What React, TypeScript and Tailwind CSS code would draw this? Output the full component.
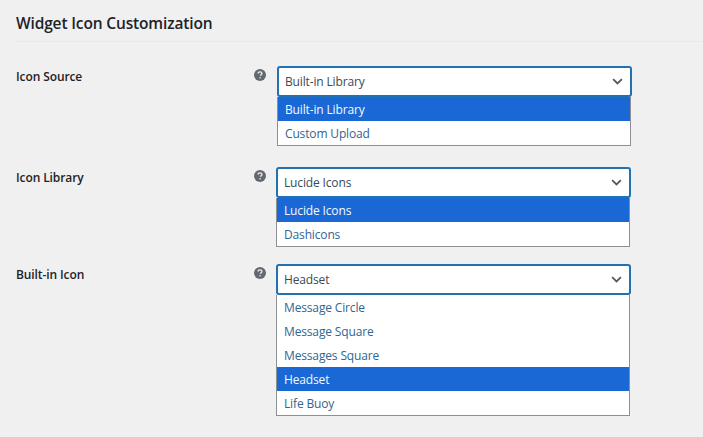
const FONT = "font-['Open_Sans','Noto_Sans',sans-serif]";

function Help() {
  return (
    <svg viewBox="0 0 12 12" className="w-[12px] h-[12px] shrink-0" aria-hidden="true">
      <circle cx="6" cy="6" r="6" fill="#646970" />
      <path d="M4.1 4.6c0-1.1.9-1.7 1.95-1.7 1.1 0 1.9.6 1.9 1.55 0 .75-.45 1.1-.95 1.4-.4.25-.6.45-.6.95" fill="none" stroke="#f0f0f1" strokeWidth="1.3" />
      <rect x="5.45" y="8.1" width="1.3" height="1.3" fill="#f0f0f1" />
    </svg>
  );
}

function Chevron() {
  return (
    <svg viewBox="0 0 12 8" className="w-[11px] h-[7px]" aria-hidden="true">
      <path d="M1 1.4 6 6.2 11 1.4" fill="none" stroke="#50575e" strokeWidth="2" />
    </svg>
  );
}

function Field({ label, value, options, rowClass, boxClass }: { label: string; value: string; options: string[]; rowClass: string; boxClass: string }) {
  return (
    <div className={`flex items-start ${rowClass}`}>
      <div className="w-[238px] shrink-0 pt-[2px] text-[12px] tracking-[-0.1px] leading-[18px] font-semibold text-[#1d2327]">{label}</div>
      <div className="w-[22px] shrink-0 pt-[3px]"><Help /></div>
      <div className={`w-[355px] shrink-0 ${boxClass}`}>
        <div className="h-[31px] rounded-[3px] border-2 border-[#2271b1] bg-white flex items-center justify-between pl-[6px] pr-[7px] text-[12px] leading-[18px] tracking-[-0.15px] text-[#3a4a55]">
          <span>{value}</span>
          <Chevron />
        </div>
        <div className="border border-t-0 border-[#8c8f94] bg-white mr-[1px]">
          {options.map((o) => (
            <div
              key={o}
              className={o === value
                ? "h-[24px] pl-[7px] pt-[2px] flex items-center text-[12px] tracking-[-0.15px] bg-[#1a68d6] text-[#f4f8ff]"
                : "h-[24px] pl-[7px] pt-[2px] flex items-center text-[12px] tracking-[-0.15px] text-[#2f6690]"}
            >
              {o}
            </div>
          ))}
        </div>
      </div>
    </div>
  );
}

export default function App() {
  return (
    <div className={`w-[703px] h-[437px] overflow-hidden bg-[#f0f0f1] ${FONT}`}>
      <div className="ml-[16px] h-[42px] border-b border-[#e8e8ec] pt-[11px]">
        <h2 className="text-[15.5px] tracking-[-0.15px] leading-[24px] font-semibold text-[#1d2327]">Widget Icon Customization</h2>
      </div>
      <div className="pl-[16px]">
        <Field label="Icon Source" value="Built-in Library" options={["Built-in Library", "Custom Upload"]} rowClass="pt-[24px]" boxClass="ml-[1px]" />
        <Field label="Icon Library" value="Lucide Icons" options={["Lucide Icons", "Dashicons"]} rowClass="pt-[21px]" boxClass="" />
        <Field label="Built-in Icon" value="Headset" options={["Message Circle", "Message Square", "Messages Square", "Headset", "Life Buoy"]} rowClass="pt-[17px]" boxClass="" />
      </div>
    </div>
  );
}
